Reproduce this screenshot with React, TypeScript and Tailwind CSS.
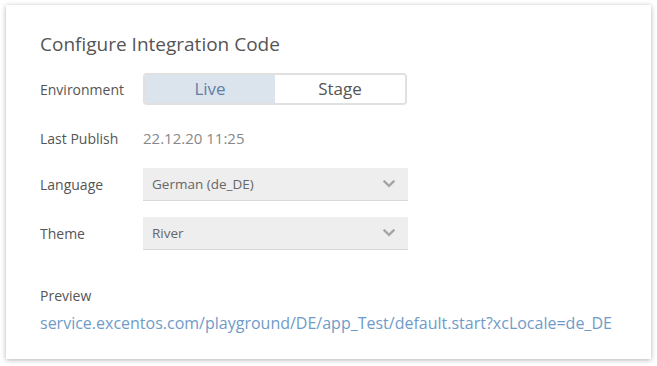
import { useState } from "react"

const labelCls = "w-[103px] shrink-0 text-[14px] text-[#555]"

function Chevron() {
  return (
    <svg width="12" height="8" viewBox="0 0 12 8" className="text-[#a5a5a5]">
      <path d="M1.5 1.5 L6 5.8 L10.5 1.5" fill="none" stroke="currentColor" strokeWidth="2.4" strokeLinecap="square" />
    </svg>
  )
}

function Select({ value }: { value: string }) {
  return (
    <div className="flex h-[33px] w-[265px] items-center justify-between border-b border-[#d9d9d9] bg-[#eeeeee] pl-[9px] pr-[13px]">
      <span className="text-[13.5px] text-[#666]">{value}</span>
      <Chevron />
    </div>
  )
}

export default function App() {
  const [env, setEnv] = useState<"live" | "stage">("live")

  return (
    <div className="h-[366px] w-[657px] bg-white pl-[6px] pt-[5px]" style={{ fontFamily: '"Open Sans", "Noto Sans", sans-serif' }}>
      <div className="flex h-[354px] w-[645px] flex-col bg-white pl-[34px] pt-[26px] shadow-[0_1px_5px_rgba(0,0,0,0.3)]">
        <h2 className="text-[19px] leading-[26px] text-[#555]">Configure Integration Code</h2>

        <div className="mt-[16px] flex h-[32px] items-center">
          <div className={labelCls}>Environment</div>
          <div className="flex h-[32px] w-[264px] overflow-hidden rounded-[4px] border-2 border-[#e0e0e0]">
            <button
              onClick={() => setEnv("live")}
              className={`flex-1 text-[17px] ${env === "live" ? "bg-[#dbe3ec] text-[#5f7fa6]" : "bg-white text-[#555]"}`}
            >
              Live
            </button>
            <button
              onClick={() => setEnv("stage")}
              className={`flex-1 text-[17px] ${env === "stage" ? "bg-[#dbe3ec] text-[#5f7fa6]" : "bg-white text-[#555]"}`}
            >
              Stage
            </button>
          </div>
        </div>

        <div className="mt-[17px] flex h-[32px] items-center">
          <div className={labelCls}>Last Publish</div>
          <div className="text-[15px] text-[#888]">22.12.20 11:25</div>
        </div>

        <div className="mt-[14px] flex items-center">
          <div className={labelCls}>Language</div>
          <Select value="German (de_DE)" />
        </div>

        <div className="mt-[16px] flex items-center">
          <div className={labelCls}>Theme</div>
          <Select value="River" />
        </div>

        <div className="mt-[36px] text-[14px] leading-[20px] text-[#555]">Preview</div>
        <a className="mt-[5px] text-[16px] leading-[24px] text-[#6f9bc8]">
          service.excentos.com/playground/DE/app_Test/default.start?xcLocale=de_DE
        </a>
      </div>
    </div>
  )
}
